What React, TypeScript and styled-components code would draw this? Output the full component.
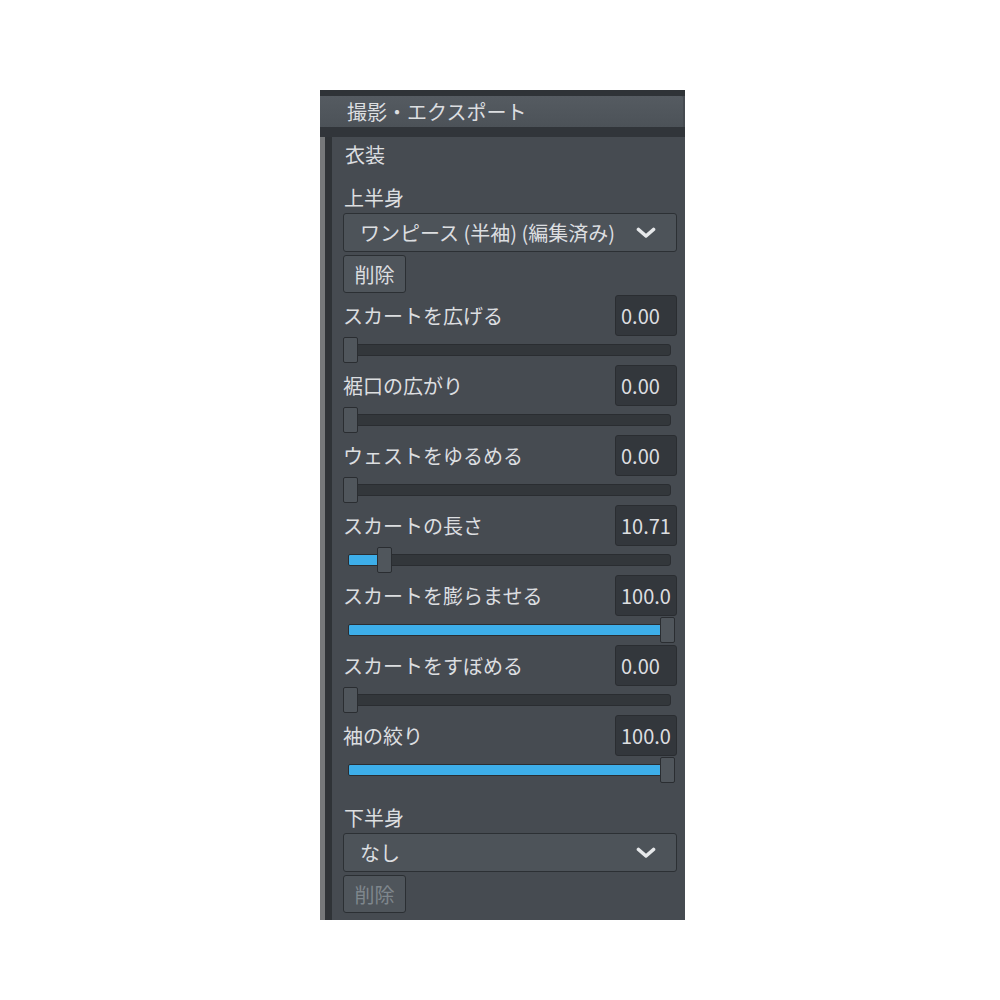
import React from "react";
import styled, { createGlobalStyle } from "styled-components";

const GlobalStyle = createGlobalStyle`
  html, body {
    margin: 0;
    padding: 0;
    background: #ffffff;
  }
  * {
    box-sizing: border-box;
  }
`;

const FONT = `"Noto Sans CJK JP", "Noto Sans", sans-serif`;

const Page = styled.div`
  display: flex;
  align-items: flex-start;
  padding: 90px 0 0 320px;
  font-family: ${FONT};
`;

const Panel = styled.div`
  width: 365px;
  height: 830px;
  display: flex;
  flex-direction: column;
  background: #464b51;
  border-top: 6px solid #2f3337;
  overflow: hidden;
`;

const TitleBar = styled.div`
  height: 31px;
  display: flex;
  align-items: center;
  padding-left: 27px;
  margin-right: 2px;
  background: linear-gradient(#555b61, #4c5258);
  border-top-right-radius: 2px;
  color: #dcdee0;
  font-size: 20px;
`;

const TitleDivider = styled.div`
  height: 10px;
  background: #31353a;
`;

const Body = styled.div`
  flex: 1;
  display: flex;
`;

const Rail = styled.div`
  width: 12px;
  border-left: 5px solid #76787a;
  background: #2f3337;
`;

const Content = styled.div`
  flex: 1;
  display: flex;
  flex-direction: column;
  padding: 0 8px 0 11px;
  color: #dcdee0;
  font-size: 20px;
`;

const SectionTitle = styled.div`
  height: 36px;
  line-height: 36px;
  padding-left: 2px;
`;

const GroupLabel = styled.div<{ $gap: number }>`
  height: 30px;
  line-height: 30px;
  margin-top: ${(p) => p.$gap}px;
  padding-left: 1px;
`;

const Select = styled.div`
  height: 39px;
  display: flex;
  align-items: center;
  justify-content: space-between;
  padding: 0 20px 0 16px;
  background: #4d5359;
  border: 1px solid #2c3034;
  border-radius: 3px;
`;

const SmallButton = styled.div<{ $disabled?: boolean }>`
  width: 63px;
  height: 38px;
  margin-top: 3px;
  display: flex;
  align-items: center;
  justify-content: center;
  background: #4f555b;
  border: 1px solid #2b2f33;
  border-radius: 3px;
  color: ${(p) => (p.$disabled ? "#7f878d" : "#dcdee0")};
`;

const Rows = styled.div`
  margin-top: 2px;
  display: flex;
  flex-direction: column;
`;

const Row = styled.div`
  height: 70px;
  display: flex;
  flex-direction: column;
`;

const RowHead = styled.div`
  height: 41px;
  display: flex;
  align-items: center;
  justify-content: space-between;
`;

const ValueBox = styled.div`
  width: 62px;
  height: 41px;
  display: flex;
  align-items: center;
  padding-left: 5px;
  background: #33373c;
  border: 1px solid #2a2d31;
  border-radius: 3px;
  font-size: 20px;
`;

const SliderArea = styled.div`
  position: relative;
  height: 29px;
  width: 334px;
`;

const Track = styled.div`
  position: absolute;
  left: 5px;
  top: 8px;
  width: 323px;
  height: 12px;
  background: #33373b;
  border: 1px solid #2a2d31;
  border-radius: 3px;
`;

const Fill = styled.div`
  position: absolute;
  left: 5px;
  top: 8px;
  height: 12px;
  background: #3daee9;
  border: 1px solid #2a2d31;
  border-radius: 2px;
`;

const Thumb = styled.div`
  position: absolute;
  top: 1px;
  width: 15px;
  height: 26px;
  background: #50565c;
  border: 1px solid #2a2d31;
  border-radius: 2px;
`;

const Chevron = () => (
  <svg width="20" height="12" viewBox="0 0 20 12">
    <polyline
      points="2.5,2.5 10,9 17.5,2.5"
      fill="none"
      stroke="#e6e8ea"
      strokeWidth="3.6"
      strokeLinecap="round"
      strokeLinejoin="round"
    />
  </svg>
);

interface SliderRowProps {
  label: string;
  value: string;
  pct: number;
}

const TRAVEL = 317;

const SliderRow: React.FC<SliderRowProps> = ({ label, value, pct }) => {
  const left = Math.round(pct * TRAVEL);
  return (
    <Row>
      <RowHead>
        <span>{label}</span>
        <ValueBox>{value}</ValueBox>
      </RowHead>
      <SliderArea>
        <Track />
        {left > 6 && <Fill style={{ width: left - 3 }} />}
        <Thumb style={{ left }} />
      </SliderArea>
    </Row>
  );
};

const sliders: SliderRowProps[] = [
  { label: "スカートを広げる", value: "0.00", pct: 0 },
  { label: "裾口の広がり", value: "0.00", pct: 0 },
  { label: "ウェストをゆるめる", value: "0.00", pct: 0 },
  { label: "スカートの長さ", value: "10.71", pct: 0.1071 },
  { label: "スカートを膨らませる", value: "100.0", pct: 1 },
  { label: "スカートをすぼめる", value: "0.00", pct: 0 },
  { label: "袖の絞り", value: "100.0", pct: 1 },
];

export default function App() {
  return (
    <>
      <GlobalStyle />
      <Page>
        <Panel>
          <TitleBar>撮影・エクスポート</TitleBar>
          <TitleDivider />
          <Body>
            <Rail />
            <Content>
              <SectionTitle>衣装</SectionTitle>
              <GroupLabel $gap={10}>上半身</GroupLabel>
              <Select>
                <span>ワンピース (半袖) (編集済み)</span>
                <Chevron />
              </Select>
              <SmallButton>削除</SmallButton>
              <Rows>
                {sliders.map((s) => (
                  <SliderRow key={s.label} {...s} />
                ))}
              </Rows>
              <GroupLabel $gap={18}>下半身</GroupLabel>
              <Select>
                <span>なし</span>
                <Chevron />
              </Select>
              <SmallButton $disabled>削除</SmallButton>
            </Content>
          </Body>
        </Panel>
      </Page>
    </>
  );
}
